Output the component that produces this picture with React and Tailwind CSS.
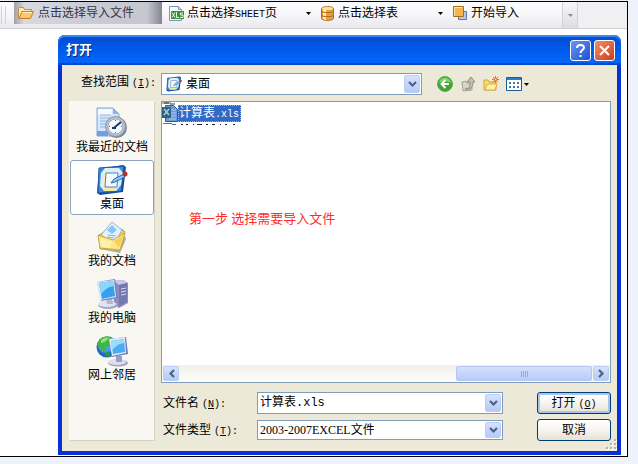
import React, { useState } from 'react';

const places = [
  { id: 'recent', label: '我最近的文档', icon: RecentIcon },
  { id: 'desktop', label: '桌面', icon: DesktopIcon },
  { id: 'documents', label: '我的文档', icon: DocumentsIcon },
  { id: 'computer', label: '我的电脑', icon: ComputerIcon },
  { id: 'network', label: '网上邻居', icon: NetworkIcon },
];

function RecentIcon() {
  return (
    <svg width="32" height="32" viewBox="0 0 32 32">
      <path d="M1 1h16l6 6v22H1z" fill="#d6e7fb" stroke="#7fa6dc" />
      <path d="M2 2h14v6H2z" fill="#f5faff" />
      <path d="M17 1v6h6z" fill="#8fb4e6" />
      <path d="M4 8h11M4 11h14M4 14h9M4 17h7M4 20h6" stroke="#8fb6ea" />
      <path d="M1 24h11v5H1z" fill="#6f9fe6" />
      <circle cx="20.500" cy="20.500" r="10.500" fill="#7b8694" />
      <circle cx="19.500" cy="19.500" r="10" fill="#b9c3cf" stroke="#8894a4" />
      <circle cx="19.500" cy="19.500" r="7.500" fill="#f3f9ff" stroke="#9dabbb" />
      <path d="M19 20l6-5M16 21h4M19 20l-1 1" stroke="#1d3a64" strokeWidth="2" />
      <path d="M19.500 13v1M19.500 25v1M13 19.500h1M25 19.500h1" stroke="#4b698e" />
    </svg>
  );
}

function DesktopIcon({ size = 32 }) {
  return (
    <svg width={size} height={size} viewBox="0 0 32 32">
      <path d="M3 5l24-4 3 2-3 25-23 3-3-2z" fill="#174a99" />
      <path d="M3 4l25-2-3 25-23 2z" fill="#3d8be0" stroke="#1b57aa" />
      <path d="M9 4h14l4 5-2 12-5 6H8l-4-5 1-13z" fill="#dcedfb" />
      <path d="M6 20l3-13 4-2 1 3-4 3-1 10 6 3-7 1z" fill="#f9efb4" />
      <path d="M7 22l15 1-4 4H8z" fill="#f7e9a0" />
      <path d="M10 9h12l-1 14H9z" fill="#f4faff" stroke="#3e83cd" />
      <path d="M15 19l3-4 10-5 1 3-10 5z" fill="#8fc5f4" stroke="#2467b3" />
      <circle cx="29" cy="10" r="2.500" fill="#b72e25" />
    </svg>
  );
}

function DocumentsIcon() {
  return (
    <svg width="32" height="32" viewBox="0 0 32 32">
      <path d="M4 28l20 4 6-14-2-5z" fill="#8a7c4d" opacity=".6" />
      <path d="M3 14l5-3 3 2 15-5 3 3-5 16-20 1z" fill="#eccb56" stroke="#c6a039" />
      <path d="M5 14L16 1l10 8-8 14z" fill="#e3f2fe" stroke="#92b6da" />
      <path d="M16 4l5 5-5 4-5-4z" fill="#8bc5f6" />
      <path d="M12 14l8 1M11 16l7 1" stroke="#8ab3df" />
      <path d="M2 14l15 5 12-7-5 17-20-2z" fill="#fbe68c" stroke="#cfa83c" />
      <path d="M4 17l12 4-2 6-9-1z" fill="#fff4b6" opacity=".8" />
      <path d="M18 20l9-5-4 12z" fill="#f2d15a" />
    </svg>
  );
}

function ComputerIcon() {
  return (
    <svg width="32" height="32" viewBox="0 0 32 32">
      <path d="M17 3l10-1 5 3v20l-9 5-5-3z" fill="#8b8cc0" />
      <path d="M18 3l9-1 4 3-8 2z" fill="#c7c9e9" />
      <path d="M23 7l8-2v19l-8 4z" fill="#7577ad" />
      <path d="M25 11l5-1M25 14l5-1M25 17l5-1" stroke="#d6d8f2" />
      <ellipse cx="12" cy="27" rx="10" ry="4" fill="#a3a6c8" />
      <ellipse cx="11" cy="26" rx="9" ry="3" fill="#e1e3f0" />
      <path d="M10 20l6-1 1 7h-6z" fill="#b3b6d6" />
      <path d="M1 4l18-3 3 19-17 3z" fill="#7b84b9" />
      <path d="M1 4l17-2 2 17-16 3z" fill="#dfe8f8" />
      <path d="M3 5l14-2 2 15-13 3z" fill="#35a0ee" />
      <path d="M3 5l14-2 1 5C11 9 9 12 5 16z" fill="#8cd5fb" />
    </svg>
  );
}

function NetworkIcon() {
  return (
    <svg width="32" height="32" viewBox="0 0 32 32">
      <circle cx="11" cy="12" r="10.500" fill="#2467c6" />
      <circle cx="10" cy="10" r="8" fill="#4f9ce9" />
      <path d="M4 4c5-4 10-3 13-1l-3 3 1 4-5 2-1 5-4-2-4-6z" fill="#3fb545" />
      <path d="M5 5c2-2 5-3 8-2l-4 4-4 1z" fill="#8ee27a" />
      <path d="M8 18l5-2 2 5-4 1z" fill="#2d9745" />
      <ellipse cx="22" cy="28" rx="10" ry="3.500" fill="#9da0c4" />
      <ellipse cx="21" cy="27" rx="9" ry="3" fill="#dddff0" />
      <path d="M20 20l6 1v6h-6z" fill="#9a9dca" />
      <path d="M13 4l17-2 2 17-16 3z" fill="#7079b7" />
      <path d="M13 4l16-2 1 16-14 3z" fill="#dfe9fa" />
      <path d="M15 6l13-2 1 13-12 2z" fill="#48adf1" />
      <path d="M15 6l13-2v4c-6 1-9 4-12 7z" fill="#9bdcfc" />
    </svg>
  );
}

function FolderOpenIcon() {
  return (
    <svg width="16" height="14" viewBox="0 0 16 14">
      <path d="M.5 12.500v-10l1-1h4l1 2h7v3" fill="#ffe7ae" stroke="#c98b35" />
      <path d="M1 12.500l3-7h11.500l-3 7z" fill="#fcc86a" stroke="#c1812b" />
      <path d="M4.500 6.500h9.500" stroke="#fff1c9" />
    </svg>
  );
}

function XlsIcon() {
  return (
    <svg width="15" height="15" viewBox="0 0 15 15">
      <path d="M.5.5h9l3 3v11H.5z" fill="#f7faff" stroke="#7896bd" />
      <path d="M9.500.5v3h3" fill="#cddcf0" stroke="#7896bd" />
      <path d="M2 5h13v8H2z" fill="#3a8f35" />
      <path d="M3 6.500l3 5M6 6.500l-3 5M7.500 6v5.500h2.500M14 7h-2.500v2H14v2.500h-3" fill="none" stroke="#e8ffe0" />
    </svg>
  );
}

function DatabaseIcon() {
  return (
    <svg width="13" height="15" viewBox="0 0 13 15">
      <path d="M.5 2.500C1 0 12 0 12.500 2.500v10c-.5 2.500-11.500 2.500-12 0z" fill="#e6a33d" stroke="#b36b1e" />
      <path d="M2 3v10l3 1V4z" fill="#fff0bd" />
      <path d="M1 5.500c1 1.500 10 1.500 11 0M1 9.500c1 1.500 10 1.500 11 0" fill="none" stroke="#a9601c" />
      <ellipse cx="6.500" cy="2.500" rx="5.500" ry="1.500" fill="#ffe1a0" />
    </svg>
  );
}

function ImportIcon() {
  return (
    <svg width="15" height="14" viewBox="0 0 15 14">
      <path d="M5.500 5.500h8v8h-8z" fill="#b7c9ea" stroke="#6477a8" />
      <path d="M.5.5h10v10H.5z" fill="#f4b44f" stroke="#a86d22" />
      <path d="M1.500 9.500v-8h8" fill="none" stroke="#ffe4a6" />
    </svg>
  );
}

function Triangle({ className }) {
  return (
    <svg width="5" height="3" viewBox="0 0 5 3" className={className}>
      <path d="M0 0h5L2.500 3z" fill="currentColor" />
    </svg>
  );
}

function Chevron({ className }) {
  return (
    <svg width="9" height="7" viewBox="0 0 9 7" className={className}>
      <path d="M1 1l3.500 3.500L8 1" fill="none" stroke="#4d6185" strokeWidth="2.200" />
    </svg>
  );
}

const arrowBox =
  'flex w-4 items-center justify-center rounded-xs border border-[#bccdf8] bg-linear-to-b from-[#d5e1fd] to-[#b5caf6]';

// half-width latin characters between the 12px chinese ones
const Latin = ({ children }) => (
  <span className="font-['Liberation_Mono',monospace] text-[10px]">{children}</span>
);

const Toolbar = () => (
  <div className="flex h-[27px] items-stretch border-b border-[#cfcfcf] bg-[#f0f0f2] whitespace-nowrap">
    <div className="flex h-full w-[578px] items-stretch bg-linear-to-b from-[#fdfdfd] via-[#f6f6f8] to-[#e9e9ee]">
      <div className="my-1 mr-2 ml-px w-[5px] border-x border-[#d2d2d6]" />
      <button className="mb-1 flex w-[148px] items-center gap-1 bg-[linear-gradient(90deg,#a0a0aa,#d9d9e0_7%,#cbcbd4_50%,#c6c6cf_90%,#85858f)] pl-1 text-[#34344a]">
        <FolderOpenIcon />
        点击选择导入文件
      </button>
      <button className="mb-1 flex w-[152px] items-center gap-[3px] pr-[3px] pl-[7px]">
        <XlsIcon />
        <span>点击选择<Latin>SHEET</Latin>页</span>
        <Triangle className="ml-auto" />
      </button>
      <button className="mb-1 flex w-[132px] items-center gap-1 pr-[3px] pl-[7px]">
        <DatabaseIcon />
        点击选择表
        <Triangle className="ml-auto" />
      </button>
      <button className="mb-1 flex flex-1 items-center gap-[3px] pl-[7px]">
        <ImportIcon />
        开始导入
      </button>
      <button
        aria-label="更多"
        className="flex w-4 items-center justify-center border-x border-[#d0d0d6] bg-linear-to-b from-[#f8f8fa] to-[#dcdce2] text-[#8c8c96]"
      >
        <Triangle />
      </button>
    </div>
  </div>
);

const TitleBar = () => (
  <div className="flex h-[30px] items-center justify-end gap-[3px] rounded-t-[7px] bg-linear-to-b from-[#0848c8] via-[#0054e3] via-30% to-[#0568ff] px-[6px] shadow-[inset_0_2px_1px_#3b8cf8,inset_0_-2px_1px_#0148cc]">
    <h1 className="mr-auto pl-[2px] text-[13px] font-bold text-white [text-shadow:1px_1px_#0a2a80]">打开</h1>
    <button
      aria-label="帮助"
      className="flex size-[21px] items-center justify-center rounded-[3px] border border-white bg-linear-to-br from-[#6b95f0] to-[#1c4fd0]"
    >
      <svg width="13" height="15" viewBox="0 0 13 15">
        <path d="M3 5c0-4 7-4 7-.5C10 7 6.500 7 6.500 10M6.500 12v2" fill="none" stroke="#fff" strokeWidth="2" />
      </svg>
    </button>
    <button
      aria-label="关闭"
      className="flex size-[21px] items-center justify-center rounded-[3px] border border-white bg-linear-to-br from-[#ef8c6c] to-[#cf3a10]"
    >
      <svg width="13" height="13" viewBox="0 0 13 13">
        <path d="M2 2l9 9M11 2l-9 9" stroke="#fff" strokeWidth="2" />
      </svg>
    </button>
  </div>
);

const NavButtons = () => (
  <div className="flex items-center gap-[7px]">
    <button aria-label="后退">
      <svg width="16" height="16" viewBox="0 0 16 16">
        <circle cx="8" cy="8" r="7.500" fill="#3fa535" stroke="#5cb04f" />
        <path d="M2 7c1-7 11-7 12 0-3-2-9-2-12 0z" fill="#86d070" />
        <path d="M8.500 4L4.500 8l4 4M5 8h7" fill="none" stroke="#fff" strokeWidth="2" />
      </svg>
    </button>
    <button aria-label="向上">
      <svg width="16" height="16" viewBox="0 0 16 16">
        <path d="M2 6l4-1 1 2h5v7l-9 1z" fill="#d6d4c8" stroke="#a5a396" />
        <path d="M5 13c5 0 5-3 5-7H7l4-5 4 5h-2c0 5-2 8-8 7z" fill="#c3c1b7" stroke="#8f8d83" />
      </svg>
    </button>
    <button aria-label="新建文件夹">
      <svg width="16" height="16" viewBox="0 0 16 16">
        <path d="M1 14V4h4l1 2h7v8z" fill="#f9dc78" stroke="#d0a33c" />
        <path d="M2 14l2-6h10l-2 6z" fill="#fff0a6" stroke="#d6ac45" />
        <path d="M12.500 0v7M9 3.500h7M10 1l5 5M15 1l-5 5" stroke="#e2632b" />
        <circle cx="12.500" cy="3.500" r="1" fill="#ffe27a" />
      </svg>
    </button>
    <button aria-label="查看" className="flex items-center gap-[2px]">
      <svg width="16" height="14" viewBox="0 0 16 14">
        <path d="M.5.5h15v13H.5z" fill="#fff" stroke="#1b5c9c" />
        <path d="M1 1h14v2H1z" fill="#2c7fd0" />
        <path d="M3 5h2v2H3zM11 5h2v2h-2zM7 9h2v2H7z" fill="#3b6fc4" />
        <path d="M7 5h2v2H7zM3 9h2v2H3z" fill="#39945c" />
        <path d="M11 9h2v2h-2z" fill="#9c5084" />
      </svg>
      <Triangle />
    </button>
  </div>
);

const PlacesBar = () => {
  const [active, setActive] = useState('desktop');

  return (
    <nav className="flex w-[86px] shrink-0 flex-col gap-[2px] border border-[#fdfcf6] border-r-[#d6d2c2] border-b-[#d6d2c2] bg-[#f9f7f1] pt-px">
      {places.map((item) => (
        <button
          key={item.id}
          onClick={() => setActive(item.id)}
          className={`flex flex-col items-center rounded-[3px] border pt-[3px] pb-[2px] leading-4 whitespace-nowrap ${
            active === item.id ? 'border-[#8ba3bd] bg-white' : 'border-transparent'
          }`}
        >
          <item.icon />
          {item.label}
        </button>
      ))}
    </nav>
  );
};

const FileList = () => (
  <div className="relative flex h-[282px] flex-col border border-[#7f9db9] bg-white">
    <svg width="16" height="3" viewBox="0 0 16 3">
      <path d="M0 0h9v2H0z" fill="#a9b7c3" />
      <path d="M2 1h5M8 2h5" stroke="#26323b" />
    </svg>
    <button className="flex h-[17px] items-center self-start">
      <svg width="16" height="17" viewBox="0 0 16 17">
        <path d="M3.500.5h8l4 4v12h-12z" fill="#6e9bd6" stroke="#34598f" />
        <path d="M7 5h7M7 8h7M7 11h7M7 14h7" stroke="#a9c8ef" />
        <path d="M0 2h9v11H0z" fill="#2f6087" />
        <path d="M2 4l5 6M7 4l-5 6" stroke="#a7d2d8" strokeWidth="1.500" />
      </svg>
      <span className="flex h-[17px] items-center border border-dotted border-[#d8a860] bg-[#316ac5] pr-px text-white">
        <span>计算表<Latin>.xls</Latin></span>
      </span>
    </button>
    <svg width="80" height="4" viewBox="0 0 80 4">
      <path d="M1 1.500h9M10 2.500h4" stroke="#5a7896" />
      <path d="M19 2.500h2M24 2.500h2M31 2.500h1M35 2.500h5M44 2.500h2M50 2.500h3M58 2.500h1M63 2.500h2M71 2.500h2" stroke="#222" />
    </svg>
    <p className="absolute top-[109px] left-[27px] text-[13px] leading-4 text-[#ff2a2a]">第一步 选择需要导入文件</p>
    <div className="mt-auto flex h-[17px] gap-px bg-linear-to-b from-[#f1f0ea] to-[#fdfdfa] p-px">
      <button aria-label="向左滚动" className={arrowBox}>
        <Chevron className="rotate-90" />
      </button>
      <div className="flex flex-1 justify-end">
        <div className="flex w-[33%] items-center justify-center gap-px rounded-xs border border-[#b4c8f4] bg-linear-to-b from-[#d3e0fd] to-[#b9ccf8]">
          <i className="h-[6px] w-px bg-[#8fabe6]" />
          <i className="h-[6px] w-px bg-[#8fabe6]" />
          <i className="h-[6px] w-px bg-[#8fabe6]" />
          <i className="h-[6px] w-px bg-[#8fabe6]" />
        </div>
      </div>
      <button aria-label="向右滚动" className={arrowBox}>
        <Chevron className="-rotate-90" />
      </button>
    </div>
  </div>
);

const SelectArrow = () => (
  <span className={`${arrowBox} pointer-events-none absolute inset-y-px right-px`}>
    <Chevron />
  </span>
);

// dotted grip in the bottom right corner of the dialog
const SizeGrip = () => (
  <svg width="11" height="11" viewBox="0 0 11 11" className="absolute right-0 bottom-px">
    <path d="M9 1h2v2H9zM5 5h2v2H5zM9 5h2v2H9zM1 9h2v2H1zM5 9h2v2H5zM9 9h2v2H9z" fill="#fff" />
    <path d="M8 0h2v2H8zM4 4h2v2H4zM8 4h2v2H8zM0 8h2v2H0zM4 8h2v2H4zM8 8h2v2H8z" fill="#b8b4a2" />
  </svg>
);

const dialogButton =
  'h-[22px] w-[74px] rounded-[3px] border border-[#003c74] bg-linear-to-b from-white via-[#f6f5f0] to-[#e4e1d6]';

export default function App() {
  const [fileName, setFileName] = useState('计算表.xls');

  return (
    <div className="min-h-screen bg-[#edf2fb] pt-px pr-[10px] pb-[7px] font-['Liberation_Serif','Noto_Sans_CJK_SC',sans-serif] text-xs text-black">
      <div className="border border-l-0 border-black bg-white">
        <Toolbar />
        <div className="mt-[6px] mr-[6px] ml-[58px] rounded-t-[7px] bg-[#0831d9]">
          <TitleBar />
          <form
            className="relative mx-1 mb-px border-b-4 border-[#0831d9] bg-[#ece9d8] pt-2 pr-[6px] pb-[10px] pl-[7px]"
            onSubmit={(e) => e.preventDefault()}
          >
            <div className="flex items-center">
              <label htmlFor="folder" className="w-[92px] pb-1 pl-3 whitespace-nowrap">
                查找范围 <Latin>(<u>I</u>):</Latin>
              </label>
              <div className="relative mr-[15px] flex h-[22px] flex-1 items-center border border-[#7f9db9] bg-white pl-1">
                <DesktopIcon size={16} />
                <select id="folder" className="h-full min-w-0 flex-1 appearance-none pl-1 outline-none">
                  <option>桌面</option>
                </select>
                <SelectArrow />
              </div>
              <div className="w-[174px]">
                <NavButtons />
              </div>
            </div>

            <div className="mt-[6px] flex gap-[6px]">
              <PlacesBar />
              <div className="min-w-0 flex-1">
                <FileList />
                <div className="mt-[9px] flex items-center">
                  <label htmlFor="file-name" className="w-24 pl-[2px]">
                    文件名 <Latin>(<u>N</u>):</Latin>
                  </label>
                  <div className="mr-[34px] flex h-[22px] min-w-0 flex-1 border border-[#7f9db9] bg-white p-px">
                    <input
                      id="file-name"
                      value={fileName}
                      onChange={(e) => setFileName(e.target.value)}
                      className="min-w-0 flex-1 px-px font-['Liberation_Mono','Noto_Sans_CJK_SC',monospace] outline-none"
                    />
                    <button type="button" aria-label="历史文件" className={arrowBox}>
                      <Chevron />
                    </button>
                  </div>
                  <button className={`${dialogButton} shadow-[inset_0_0_0_2px_#a9c4f2]`}>
                    打开 <Latin>(<u>O</u>)</Latin>
                  </button>
                </div>
                <div className="mt-[5px] flex items-center">
                  <label htmlFor="file-type" className="w-24 pl-[2px]">
                    文件类型 <Latin>(<u>T</u>):</Latin>
                  </label>
                  <div className="relative mr-[34px] h-5 min-w-0 flex-1 border border-[#7f9db9] bg-white">
                    <select id="file-type" className="h-full w-full appearance-none px-[2px] outline-none">
                      <option>2003-2007EXCEL文件</option>
                    </select>
                    <SelectArrow />
                  </div>
                  <button type="button" className={dialogButton}>取消</button>
                </div>
              </div>
            </div>
            <SizeGrip />
          </form>
        </div>
      </div>
    </div>
  );
}
